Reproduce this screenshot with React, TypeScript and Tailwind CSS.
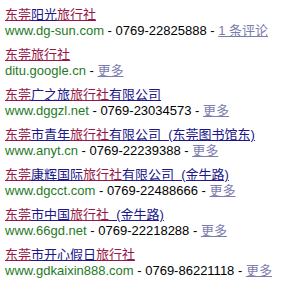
import React from "react";

type Seg = { t: string; k?: boolean };
type Item = { title: Seg[]; url: string; phone?: string; more: string };

const items: Item[] = [
  { title: [{ t: "东莞", k: true }, { t: "阳光" }, { t: "旅行社", k: true }], url: "www.dg-sun.com", phone: "0769-22825888", more: "1 条评论" },
  { title: [{ t: "东莞", k: true }, { t: "旅行社", k: true }], url: "ditu.google.cn", more: "更多" },
  { title: [{ t: "东莞", k: true }, { t: "广之旅" }, { t: "旅行社", k: true }, { t: "有限公司" }], url: "www.dggzl.net", phone: "0769-23034573", more: "更多" },
  { title: [{ t: "东莞", k: true }, { t: "市青年" }, { t: "旅行社", k: true }, { t: "有限公司\u00a0\u00a0(东莞图书馆东)" }], url: "www.anyt.cn", phone: "0769-22239388", more: "更多" },
  { title: [{ t: "东莞", k: true }, { t: "康辉国际" }, { t: "旅行社", k: true }, { t: "有限公司\u00a0\u00a0(金牛路)" }], url: "www.dgcct.com", phone: "0769-22488666", more: "更多" },
  { title: [{ t: "东莞", k: true }, { t: "市中国" }, { t: "旅行社", k: true }, { t: "\u00a0\u00a0(金牛路)" }], url: "www.66gd.net", phone: "0769-22218288", more: "更多" },
  { title: [{ t: "东莞", k: true }, { t: "市开心假日" }, { t: "旅行社", k: true }], url: "www.gdkaixin888.com", phone: "0769-86221118", more: "更多" },
];

export default function App() {
  return (
    <div
      className="w-[282px] h-[289px] bg-white overflow-hidden pt-[7px] pl-[5px] flex flex-col gap-[8px] text-[13px] leading-[16px]"
      style={{ fontFamily: '"Liberation Sans", "Noto Sans CJK SC", sans-serif' }}
    >
      {items.map((it, i) => (
        <div key={i} className="flex flex-col whitespace-nowrap">
          <div>
            {it.title.map((s, j) => (
              <span
                key={j}
                className={
                  s.k
                    ? "text-[#961848] underline decoration-[#961848] whitespace-pre"
                    : "text-[#20168a] underline decoration-[#20168a] whitespace-pre"
                }
              >
                {s.t}
              </span>
            ))}
          </div>
          <div className="text-black">
            <span className="text-[#1f7a1f]">{it.url}</span>
            <span> - </span>
            {it.phone && (
              <>
                <span>{it.phone}</span>
                <span> - </span>
              </>
            )}
            <span className="text-[#7c7cae] underline decoration-[#7c7cae]">{it.more}</span>
          </div>
        </div>
      ))}
    </div>
  );
}
